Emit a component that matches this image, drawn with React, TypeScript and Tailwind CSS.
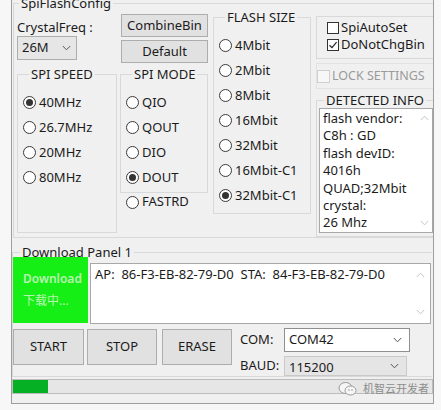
import type { ReactNode } from 'react'

const FONT = "font-['Noto_Sans','Noto_Sans_CJK_SC',sans-serif]"

/** Classic Win32 radio button. */
function Radio({ label, checked = false }: { label: string; checked?: boolean }) {
  return (
    <div className="flex h-[25px] items-center">
      <span className="flex h-[13px] w-[13px] shrink-0 items-center justify-center rounded-full border border-[#3a3a3a] bg-white">
        {checked && <span className="h-[7px] w-[7px] rounded-full bg-[#333]" />}
      </span>
      <span className="ml-[3px] whitespace-nowrap">{label}</span>
    </div>
  )
}

function Check({ label, checked = false }: { label: string; checked?: boolean }) {
  return (
    <div className="flex h-[17px] items-center leading-[17px]">
      <span className="flex h-[12px] w-[12px] shrink-0 items-center justify-center border border-[#333] bg-white">
        {checked && (
          <svg width="10" height="10" viewBox="0 0 10 10">
            <path d="M1.5 5.2 L4 7.6 L8.6 2.2" fill="none" stroke="#222" strokeWidth="1.2" />
          </svg>
        )}
      </span>
      <span className="ml-[2px] whitespace-nowrap">{label}</span>
    </div>
  )
}

function Chevron({ color = '#555', up = false }: { color?: string; up?: boolean }) {
  return (
    <svg width="9" height="6" viewBox="0 0 9 6">
      <path
        d={up ? 'M0.8 5 L4.5 1.2 L8.2 5' : 'M0.8 1 L4.5 4.8 L8.2 1'}
        fill="none"
        stroke={color}
        strokeWidth="1"
      />
    </svg>
  )
}

function Button({ children, className }: { children: ReactNode; className: string }) {
  return (
    <div
      className={`flex items-center justify-center border border-[#adadad] bg-[#e1e1e1] ${className}`}
    >
      {children}
    </div>
  )
}

/** Group box: title sits on the top border line. */
function Group({
  title,
  className,
  children,
}: {
  title: string
  className: string
  children: ReactNode
}) {
  return (
    <fieldset className={`border border-[#d9d9d9] ${className}`}>
      <legend className="ml-[6px] px-[2px] leading-[16px] whitespace-nowrap">{title}</legend>
      {children}
    </fieldset>
  )
}

export default function App() {
  return (
    <div className={`h-[410px] w-[441px] overflow-hidden bg-[#f7f7f7] text-[13px] text-[#1b1b1b] ${FONT}`}>
      <div className="relative ml-[11px] flex h-[404px] w-[423px] flex-col overflow-hidden border-x border-b border-[#9e9e9e] bg-[#f0f0f0]">
        {/* SpiFlashConfig */}
        <fieldset className="-mt-[5px] ml-[1px] h-[243px] w-[419px] border border-r-0 border-[#d9d9d9]">
          <legend className="ml-[5px] px-[2px] leading-[16px]">SpiFlashConfig</legend>
          <div className="flex items-start">
            {/* crystal + spi speed */}
            <div className="flex w-[103px] flex-col">
              <div className="mt-[8px] pl-[3px] leading-[16px]">CrystalFreq :</div>
              <div className="mt-[1px] ml-[3px] flex h-[24px] w-[60px] items-center justify-between border border-[#adadad] bg-[#e6e6e6] pl-[4px] pr-[5px]">
                <span>26M</span>
                <Chevron />
              </div>
              <Group title="SPI SPEED" className="mt-[6px] ml-[3px] h-[167px] w-[100px] pl-[5px]">
                <div className="pt-[8px]">
                  <Radio label="40MHz" checked />
                  <Radio label="26.7MHz" />
                  <Radio label="20MHz" />
                  <Radio label="80MHz" />
                </div>
              </Group>
            </div>

            {/* buttons + spi mode */}
            <div className="flex w-[96px] flex-col">
              <Button className="mt-[3px] ml-[4px] h-[23px] w-[87px]">CombineBin</Button>
              <Button className="mt-[3px] ml-[4px] h-[23px] w-[87px]">Default</Button>
              <Group title="SPI MODE" className="mt-[3px] ml-[3px] h-[127px] w-[88px] pl-[5px]">
                <div className="pt-[8px]">
                  <Radio label="QIO" />
                  <Radio label="QOUT" />
                  <Radio label="DIO" />
                  <Radio label="DOUT" checked />
                </div>
              </Group>
              <div className="ml-[9px] flex h-[18px] items-center">
                <span className="h-[13px] w-[13px] rounded-full border border-[#3a3a3a] bg-white" />
                <span className="ml-[3px]">FASTRD</span>
              </div>
            </div>

            {/* flash size */}
            <Group title="FLASH SIZE" className="-mt-[2px] h-[205px] w-[98px] pl-[5px]">
              <div className="pt-[8px]">
                <Radio label="4Mbit" />
                <Radio label="2Mbit" />
                <Radio label="8Mbit" />
                <Radio label="16Mbit" />
                <Radio label="32Mbit" />
                <Radio label="16Mbit-C1" />
                <Radio label="32Mbit-C1" checked />
              </div>
            </Group>

            {/* options + detected info */}
            <div className="ml-[5px] flex w-[118px] flex-col">
              <div className="mt-[5px] h-[43px] border border-[#d9d9d9] pt-[2px] pl-[10px]">
                <Check label="SpiAutoSet" />
                <Check label="DoNotChgBin" checked />
              </div>
              <div className="mt-[4px] flex h-[26px] items-center border border-[#e2e2e2]">
                <span className="h-[13px] w-[13px] shrink-0 border border-[#cfcfcf] bg-[#f7f7f7]" />
                <span className="ml-[2px] whitespace-nowrap text-[12.5px] text-[#9a9a9a]">LOCK SETTINGS</span>
              </div>
              <fieldset className="mt-[3px] h-[145px] border border-r-0 border-[#d9d9d9]">
                <legend className="ml-[7px] px-[2px] leading-[16px] whitespace-nowrap">DETECTED INFO</legend>
                <div className="ml-[2px] flex h-[125px] w-[114px] border border-[#a8a8a8] bg-white">
                  <div className="flex-1 pt-[1px] pl-[3px] leading-[17.4px]">
                    <div>flash vendor:</div>
                    <div>C8h : GD</div>
                    <div>flash devID:</div>
                    <div>4016h</div>
                    <div>QUAD;32Mbit</div>
                    <div>crystal:</div>
                    <div>26 Mhz</div>
                  </div>
                  <div className="flex w-[16px] flex-col items-center justify-between pt-[6px] pb-[6px]">
                    <Chevron color="#c4c4c4" up />
                    <Chevron color="#c4c4c4" />
                  </div>
                </div>
              </fieldset>
            </div>
          </div>
        </fieldset>

        {/* Download Panel 1 */}
        <fieldset className="mt-[6px] w-[420px] border border-r-0 border-[#d9d9d9]">
          <legend className="ml-[7px] px-[2px] leading-[16px]">Download Panel 1</legend>
          <div className="flex items-start">
            <div className="-mt-[3px] flex h-[66px] w-[75px] flex-col bg-[#16ef16] pt-[11px] pl-[10px] text-[12px] leading-[22px] font-semibold text-[#b9f5b2]">
              <span>Download</span>
              <span className="font-normal">下载中...</span>
            </div>
            <div className="mt-[3px] ml-[2px] flex h-[61px] w-[341px] border border-[#a8a8a8] bg-white">
              <div className="flex-1 pt-[2px] pl-[4px] leading-[17px] whitespace-pre">
                AP:  86-F3-EB-82-79-D0  STA:  84-F3-EB-82-79-D0
              </div>
              <div className="flex w-[20px] flex-col items-center justify-between pt-[8px] pb-[8px]">
                <Chevron color="#c4c4c4" up />
                <Chevron color="#c4c4c4" />
              </div>
            </div>
          </div>

          <div className="mt-[4px] flex items-start">
            <Button className="mt-[1px] h-[36px] w-[71px]">START</Button>
            <Button className="mt-[1px] ml-[3px] h-[36px] w-[70px]">STOP</Button>
            <Button className="mt-[1px] ml-[5px] h-[36px] w-[70px]">ERASE</Button>
            <div className="ml-[8px] flex flex-col">
              <div className="flex h-[24px] items-center">
                <span className="w-[44px]">COM:</span>
                <div className="flex h-[24px] w-[126px] items-center justify-between border border-[#8f8f8f] bg-white pl-[4px] pr-[7px]">
                  <span>COM42</span>
                  <Chevron />
                </div>
              </div>
              <div className="mt-[4px] flex h-[20px] items-center">
                <span className="w-[44px]">BAUD:</span>
                <div className="flex h-[20px] w-[123px] items-center justify-between border border-[#c9c9c9] bg-[#e5e5e5] pl-[4px] pr-[7px]">
                  <span className="pt-[3px]">115200</span>
                  <Chevron />
                </div>
              </div>
            </div>
          </div>
        </fieldset>

        {/* progress */}
        <div className="mt-[2px] h-[15px] w-[421px] border border-[#bcbcbc] bg-[#e6e6e6]">
          <div className="h-full w-[35px] bg-[#06b025]" />
        </div>

        {/* watermark overlay */}
        <div className="absolute top-[381px] left-[326px] flex items-center text-[11px] text-[#8c8c8c]">
          <svg width="20" height="16" viewBox="0 0 20 16">
            <ellipse cx="7.5" cy="7" rx="6.5" ry="5.5" fill="#f6f6f6" stroke="#9a9a9a" strokeWidth="1" />
            <ellipse cx="12.5" cy="9.5" rx="5.5" ry="4.5" fill="#f6f6f6" stroke="#9a9a9a" strokeWidth="1" />
            <circle cx="11" cy="9" r="0.8" fill="#9a9a9a" />
            <circle cx="14" cy="9" r="0.8" fill="#9a9a9a" />
          </svg>
          <span className="ml-[5px]">机智云开发者</span>
        </div>
      </div>
    </div>
  )
}
